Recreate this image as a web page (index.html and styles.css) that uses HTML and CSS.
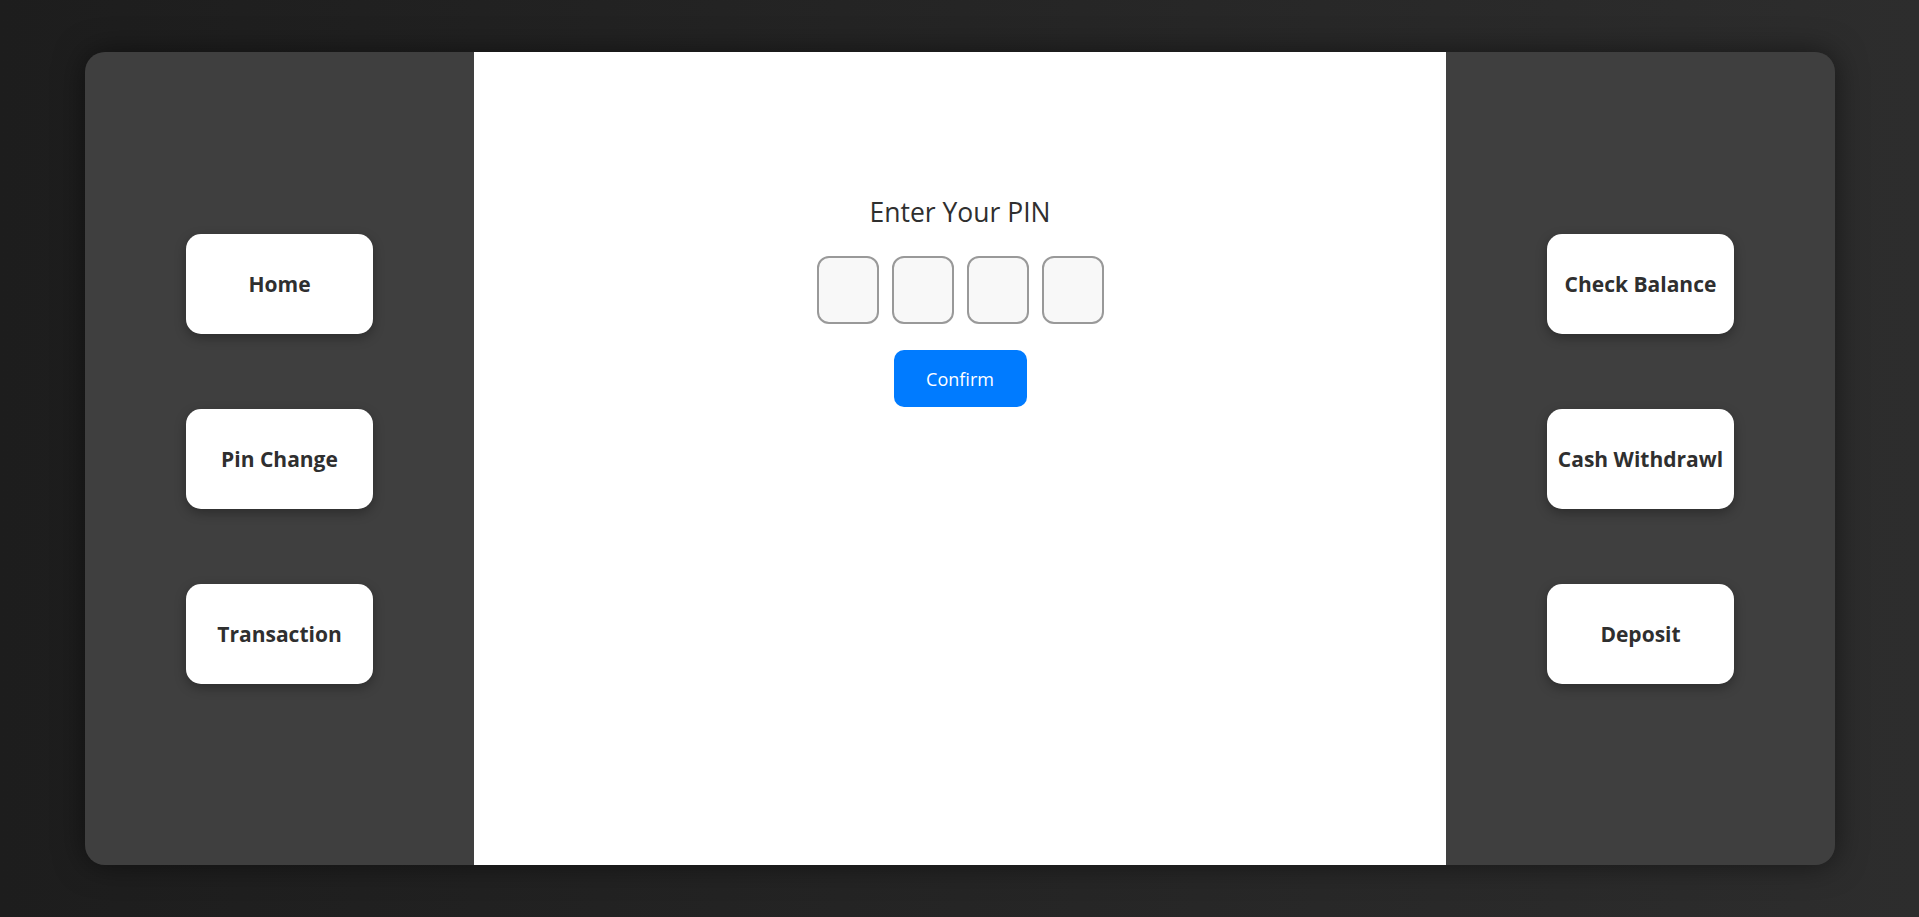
FILE: index.html
```html
<!DOCTYPE html>
<html lang="en">
<head>
<meta charset="utf-8">
<title>ATM</title>
<link rel="stylesheet" href="styles.css">
</head>
<body>
<div class="atm">
  <aside class="side side-left">
    <button class="opt">Home</button>
    <button class="opt">Pin Change</button>
    <button class="opt">Transaction</button>
  </aside>
  <main class="screen">
    <h2 class="title">Enter Your PIN</h2>
    <div class="pins">
      <input class="pin" type="password" maxlength="1">
      <input class="pin" type="password" maxlength="1">
      <input class="pin" type="password" maxlength="1">
      <input class="pin" type="password" maxlength="1">
    </div>
    <button class="confirm">Confirm</button>
  </main>
  <aside class="side side-right">
    <button class="opt">Check Balance</button>
    <button class="opt">Cash Withdrawl</button>
    <button class="opt">Deposit</button>
  </aside>
</div>
</body>
</html>
```
FILE: styles.css
```css
* { box-sizing: border-box; }
html, body { height: 100%; }
body {
  margin: 0;
  padding: 52px 84px 52px 85px;
  background: linear-gradient(to right, #1d1d1d, #2d2d2d);
  font-family: "Open Sans", "Noto Sans", sans-serif;
}
.atm {
  width: 1750px;
  height: 813px;
  display: flex;
  border-radius: 20px;
  box-shadow: 0 0 30px rgba(0, 0, 0, 0.5);
}
.side {
  flex: 0 0 389px;
  background: #3f3f3f;
  display: flex;
  flex-direction: column;
  align-items: center;
  justify-content: center;
  gap: 75px;
}
.side-left { border-radius: 20px 0 0 20px; }
.side-right { border-radius: 0 20px 20px 0; }
.opt {
  width: 187px;
  height: 100px;
  border: none;
  border-radius: 15px;
  background: #fff;
  color: #2f2f2f;
  font-family: "Open Sans", "Noto Sans", sans-serif;
  font-weight: 700;
  font-size: 21px;
  padding: 0;
  box-shadow: 0 4px 12px rgba(0, 0, 0, 0.3);
}
.screen {
  flex: 0 0 972px;
  background: #fff;
  display: flex;
  flex-direction: column;
  align-items: center;
  padding-top: 142px;
  gap: 26px;
}
.title {
  margin: 0;
  font-size: 26.5px;
  line-height: 36px;
  font-weight: 400;
  color: #2f2f2f;
}
.pins {
  display: flex;
  gap: 13px;
}
.pin {
  width: 62px;
  height: 68px;
  border: 2px solid #999;
  border-radius: 12px;
  background: #f8f8f8;
  margin: 0;
  padding: 0;
  text-align: center;
  font-size: 24px;
}
.confirm {
  width: 133px;
  height: 57px;
  border: none;
  border-radius: 10px;
  background: #007bff;
  color: #fff;
  font-family: "Open Sans", "Noto Sans", sans-serif;
  font-size: 18px;
  padding: 0;
}
```
